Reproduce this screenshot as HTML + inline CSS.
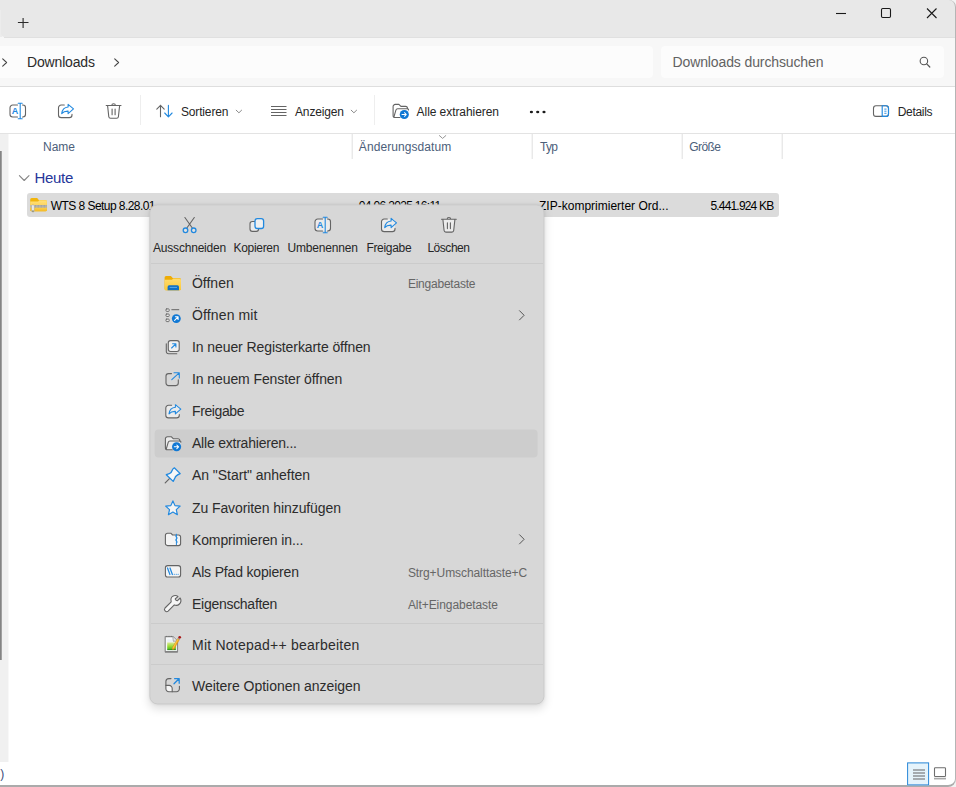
<!DOCTYPE html><html lang="de"><head><meta charset="utf-8"><title>Downloads</title><style>
*{box-sizing:border-box}
html,body{margin:0;padding:0}
body{width:956px;height:787px;overflow:hidden;background:#fff;position:relative;font-family:"Liberation Sans",sans-serif;}
.a{position:absolute}
.t{position:absolute;white-space:nowrap;line-height:20px;height:20px}
svg{position:absolute;left:0;top:0;overflow:visible}
</style></head><body>
<div class="a" style="left:0;top:0;width:956px;height:87px;background:#f7f7f7"></div>
<div class="a" style="left:0;top:0;width:2px;height:37px;background:#ececec"></div>
<div class="a" style="left:0;top:0;width:2px;height:10px;background:#e8e8e8"></div>
<div class="a" style="left:1px;top:0;width:955px;height:37px;background:#e8e8e8;border-bottom-left-radius:4px"></div>
<div class="a" style="left:4px;top:37px;width:952px;height:1px;background:#e0e0e0"></div>
<div class="a" style="left:-10px;top:46px;width:663px;height:32px;background:#fcfcfc;border-radius:4px"></div>
<div class="a" style="left:661px;top:46px;width:283px;height:32px;background:#fcfcfc;border-radius:4px"></div>
<div class="a" style="left:0;top:86px;width:956px;height:1px;background:#dedede"></div>
<div class="a" style="left:0;top:87px;width:956px;height:46px;background:#fff"></div>
<div class="a" style="left:0;top:133px;width:956px;height:1px;background:#e3e3e3"></div>
<div class="a" style="left:0;top:134px;width:8px;height:628px;background:#f0f0f0"></div>
<div class="a" style="left:8px;top:134px;width:1px;height:628px;background:#f8f8f8"></div>
<div class="a" style="left:0;top:151px;width:2px;height:509px;background:linear-gradient(90deg,#848484 50%,#a0a0a0 50%)"></div>
<div class="a" style="left:351px;top:134px;width:2px;height:25px;background:linear-gradient(90deg,#f5f5f5 50%,#e9e9e9 50%)"></div>
<div class="a" style="left:531px;top:134px;width:2px;height:25px;background:linear-gradient(90deg,#f5f5f5 50%,#e9e9e9 50%)"></div>
<div class="a" style="left:681px;top:134px;width:2px;height:25px;background:linear-gradient(90deg,#f5f5f5 50%,#e9e9e9 50%)"></div>
<div class="a" style="left:781px;top:134px;width:2px;height:25px;background:linear-gradient(90deg,#f5f5f5 50%,#e9e9e9 50%)"></div>
<div class="a" style="left:26.700px;top:193px;width:752px;height:24px;background:#dbdbdb;border-radius:3px"></div>
<div class="a" style="left:-20px;top:0;width:976px;height:787px;border:1px solid #b5b5b5;border-top:0;border-left:0;border-bottom:2.2px solid #ababab;border-radius:0 7px 8px 0;box-shadow:0 0 0 12px #f3f3f3;pointer-events:none"></div>
<div class="a" style="left:907px;top:762px;transform:translate(.1px,.4px);width:21.800px;height:23.200px;background:#e5f3fb;border:1px solid #2b88d8"></div>
<span class="t" style="left:27.00px;top:52.00px;font-size:14px;color:#2b2b2b;letter-spacing:-0.158px;">Downloads</span>
<span class="t" style="left:672.50px;top:52.00px;font-size:14px;color:#626262;letter-spacing:-0.116px;">Downloads durchsuchen</span>
<span class="t" style="left:181.00px;top:102.00px;font-size:12px;color:#262626;letter-spacing:-0.161px;">Sortieren</span>
<span class="t" style="left:295.00px;top:102.00px;font-size:12px;color:#262626;letter-spacing:-0.148px;">Anzeigen</span>
<span class="t" style="left:416.60px;top:102.00px;font-size:12px;color:#262626;letter-spacing:-0.065px;">Alle extrahieren</span>
<span class="t" style="left:897.70px;top:102.00px;font-size:12px;color:#262626;letter-spacing:-0.297px;">Details</span>
<span class="t" style="left:43.00px;top:137.00px;font-size:12px;color:#4c607a;">Name</span>
<span class="t" style="left:358.80px;top:137.00px;font-size:12px;color:#4c607a;letter-spacing:0.085px;">Änderungsdatum</span>
<span class="t" style="left:540.00px;top:137.00px;font-size:12px;color:#4c607a;letter-spacing:-0.671px;">Typ</span>
<span class="t" style="left:689.30px;top:137.00px;font-size:12px;color:#4c607a;letter-spacing:-0.577px;">Größe</span>
<span class="t" style="left:34.60px;top:167.00px;font-size:15px;color:#26379a;line-height:21px;height:21px;letter-spacing:-0.332px;">Heute</span>
<span class="t" style="left:50.80px;top:196.00px;font-size:12px;color:#000;letter-spacing:-0.557px;">WTS 8 Setup 8.28.01</span>
<span class="t" style="left:358.80px;top:196.00px;font-size:12px;color:#000;letter-spacing:-0.669px;">04.06.2025 16:11</span>
<span class="t" style="left:539.00px;top:196.00px;font-size:12px;color:#000;letter-spacing:0.007px;">ZIP-komprimierter Ord...</span>
<span class="t" style="left:710.40px;top:196.00px;font-size:12px;color:#000;letter-spacing:-0.812px;">5.441.924 KB</span>
<span class="t" style="left:0.30px;top:764.00px;font-size:12px;color:#3c4a78;">)</span>
<svg width="956" height="787" viewBox="0 0 956 787" fill="none">

<!-- new tab plus -->
<path d="M17.900 22.500h10.600M23.100 17.900v10" stroke="#2b2b2b" stroke-width="1.100"/>
<!-- window controls -->
<path d="M836 13.500h10" stroke="#1a1a1a" stroke-width="1.100"/>
<rect x="881.500" y="8.500" width="9" height="9" rx="1.200" stroke="#1a1a1a" stroke-width="1.100"/>
<path d="M927 8.500l9.500 9.500M936.500 8.500l-9.500 9.500" stroke="#1a1a1a" stroke-width="1.100"/>
<!-- breadcrumb chevrons -->
<path d="M2.700 58.800l3.900 3.700l-3.900 3.700" stroke="#444" stroke-width="1.100" stroke-linecap="round" stroke-linejoin="round"/>
<path d="M114.700 58.800l3.900 3.700l-3.900 3.700" stroke="#444" stroke-width="1.100" stroke-linecap="round" stroke-linejoin="round"/>
<!-- search icon -->
<circle cx="923.900" cy="61" r="3.750" stroke="#555" stroke-width="1.100"/>
<path d="M926.700 63.900l3.100 3.100" stroke="#555" stroke-width="1.200" stroke-linecap="round"/>
<!-- toolbar -->
<g transform="translate(9.5,105)" stroke-linecap="round" stroke-linejoin="round">
<rect x=".5" y="0" width="15.500" height="12" rx="2.700" fill="none"/>
<path d="M8 0H3.2A2.7 2.7 0 0 0 .5 2.7v6.6A2.7 2.7 0 0 0 3.2 12H8M13 0h.3A2.7 2.7 0 0 1 16 2.7v6.6a2.7 2.7 0 0 1-2.700 2.700H13" stroke="#646464" stroke-width="1.1"/>
<path d="M10.700 -1.700V13.700M8.700 -1.700h4M8.700 13.700h4" stroke="#2289df" stroke-width="1.100"/>
<text x="2.300" y="9.300" font-family="Liberation Sans, sans-serif" font-size="9" font-weight="bold" fill="#2289df" stroke="none">A</text>
</g>
<g transform="translate(58.5,105)" stroke-linecap="round" stroke-linejoin="round">
<rect x="0" y="0" width="13.500" height="12.600" rx="2.700" fill="none"/>
<path d="M5.800 0H2.700A2.700 2.700 0 0 0 0 2.700v7.200a2.700 2.700 0 0 0 2.700 2.700h8.100a2.700 2.700 0 0 0 2.700 -2.700V9.300" stroke="#646464" stroke-width="1.100"/>
<path d="M9.600 -0.600L15 3.900L9.600 8.600V6.100C6.600 6 4.600 6.900 3.200 8.600C3.600 5 5.800 2.400 9.600 2Z" stroke="#2289df" stroke-width="1.100" fill="none"/>
</g>
<g transform="translate(106.2,105.5)" stroke="#646464" stroke-width="1.100" stroke-linecap="round" stroke-linejoin="round">
<path d="M1.400 0.200L2.600 11.200a1.800 1.800 0 0 0 1.800 1.600h6a1.800 1.800 0 0 0 1.800 -1.600L13.400 0.200Z" fill="none" stroke="none"/>
<path d="M0 0H14.800M5.600 0a1.800 1.800 0 0 1 3.600 0M1.400 0.200L2.600 11.200a1.800 1.800 0 0 0 1.800 1.600h6a1.800 1.800 0 0 0 1.800 -1.600L13.400 0.200M5.900 3.500v5.800M8.900 3.500v5.800"/>
</g>
<path d="M140.500 95v30M374.500 95v30" stroke="#eeeeee" stroke-width="1"/>
<!-- sort icon -->
<path d="M160.500 116.800V105.400M156.800 109.200l3.700 -3.800l3.700 3.800" stroke="#646464" stroke-width="1.100" stroke-linecap="round" stroke-linejoin="round"/>
<path d="M168.400 105.400V116.800M164.700 113l3.700 3.800l3.700 -3.800" stroke="#2289df" stroke-width="1.100" stroke-linecap="round" stroke-linejoin="round"/>
<path d="M236.2 110.2l2.700 2.600l2.700 -2.600" stroke="#8a8a8a" stroke-width="1" stroke-linecap="round" stroke-linejoin="round"/>
<!-- view icon -->
<path d="M271 106.500h15.500M271 109.500h15.500M271 112.500h15.500M271 115.500h15.500" stroke="#646464" stroke-width="1"/>
<path d="M351.2 110.2l2.700 2.600l2.700 -2.600" stroke="#8a8a8a" stroke-width="1" stroke-linecap="round" stroke-linejoin="round"/>
<g transform="translate(393,104)" stroke-linecap="round" stroke-linejoin="round">
<path d="M7 13.500H2.200A2.100 2.100 0 0 1 .1 11.400V2.500A2.100 2.100 0 0 1 2.200 .4H5.900L7.900 2.400H12.500A2 2 0 0 1 14.500 4.400V4.700H15.500V10Z" stroke="none" fill="none"/>
<path d="M7 13.500H2.200A2.100 2.100 0 0 1 .1 11.400V2.500A2.100 2.100 0 0 1 2.200 .4H5.900L7.900 2.400H12.500A2 2 0 0 1 14.500 4.400V4.700" stroke="#646464" stroke-width="1.100"/>
<path d="M1 12.600L2.900 6.100A1.900 1.900 0 0 1 4.700 4.700H14.500A1 1 0 0 1 15.500 6" stroke="#646464" stroke-width="1.100"/>
<circle cx="11.300" cy="10.500" r="4.550" fill="#1078d4"/>
<path d="M9 10.500h4.200M11.500 8.700l1.800 1.800l-1.800 1.800" stroke="#fff" stroke-width="1.050"/>
</g>
<ellipse cx="531.400" cy="112" rx="1.600" ry="1.350" fill="#1a1a1a"/><ellipse cx="537.700" cy="112" rx="1.600" ry="1.350" fill="#1a1a1a"/><ellipse cx="544" cy="112" rx="1.600" ry="1.350" fill="#1a1a1a"/>
<!-- details icon -->
<rect x="873.500" y="105.700" width="15" height="10.700" rx="2.500" stroke="#646464" stroke-width="1.100"/>
<path d="M882.200 105.700h3.800A2.500 2.500 0 0 1 888.500 108.200v5.700a2.500 2.500 0 0 1 -2.500 2.500h-3.800z" stroke="#2289df" stroke-width="1.150"/>
<path d="M884.300 109.100h2.200M884.300 111.200h2.200M884.300 113.300h2.200" stroke="#2289df" stroke-width="0.900"/>
<!-- sort indicator chevron in header -->
<path d="M439.400 135.600l3.200 2.800l3.200 -2.800" stroke="#959595" stroke-width="1" stroke-linecap="round" stroke-linejoin="round"/>
<!-- group chevron -->
<path d="M19.400 175.700l4.800 4.800l4.800 -4.800" stroke="#858585" stroke-width="1.100" stroke-linecap="round" stroke-linejoin="round"/>
<!-- zip folder icon -->
<defs><linearGradient id="zfg" x1="0" y1="0" x2="0" y2="1"><stop offset="0" stop-color="#ffe07a"/><stop offset=".6" stop-color="#fdd257"/><stop offset="1" stop-color="#f5bb25"/></linearGradient></defs>
<g transform="translate(30.200,197.900)">
<path d="M0 1.500A1.500 1.500 0 0 1 1.500 0H7l1.600 2H15.200A1.500 1.500 0 0 1 16.700 3.500V11.800A1.500 1.500 0 0 1 15.200 13.300H1.500A1.500 1.500 0 0 1 0 11.800Z" fill="#f2b50c"/>
<path d="M0 3.600H8L9 2.400H15.500A1.200 1.200 0 0 1 16.700 3.600V11.800A1.500 1.500 0 0 1 15.200 13.300H1.500A1.500 1.500 0 0 1 0 11.800Z" fill="url(#zfg)"/>
<path d="M0 8.400H16.700" stroke="#b9b9b4" stroke-width="2.600"/>
<path d="M3.500 7.700H16.700M3.500 9.100H16.700" stroke="#8f8f8a" stroke-width="0.700" stroke-dasharray="0.800 0.700"/>
<rect x="1.500" y="7" width="2.500" height="7" rx="0.700" fill="#f1f1f1" stroke="#a0a09a" stroke-width="0.500"/>
<rect x="1.900" y="12.500" width="1.700" height="1.500" fill="#8a8a70"/>
</g>
<!-- status bar view icons -->
<path d="M913 770h12M913 773h12M913 776h12M913 779h12" stroke="#8e9296" stroke-width="1.300"/>
<rect x="934.500" y="767.800" width="11" height="8.700" rx="0.800" stroke="#6e6e6e" stroke-width="1.100" fill="#fff"/>
<path d="M934 778.600h12" stroke="#a9a9a9" stroke-width="1.700"/>

</svg>
<div class="a" style="left:149px;top:204px;transform:translate(.4px,.4px);width:394.600px;height:500.400px;background:#d7d7d7;border:1px solid #cacaca;border-radius:8px;box-shadow:0 4px 10px rgba(0,0,0,.13),0 0 3px rgba(0,0,0,.05)"></div>
<div class="a" style="left:150.5px;top:263px;width:392px;height:1px;background:#cbcbcb"></div>
<div class="a" style="left:150.5px;top:622.5px;width:392px;height:1px;background:#cbcbcb"></div>
<div class="a" style="left:150.5px;top:664px;width:392px;height:1px;background:#cbcbcb"></div>
<div class="a" style="left:154px;top:429px;transform:translate(.6px,.4px);width:383.300px;height:27.600px;background:#cdcdcd;border-radius:4px"></div>
<span class="t" style="left:153.00px;top:238.00px;font-size:12px;color:#262626;letter-spacing:-0.199px;">Ausschneiden</span>
<span class="t" style="left:233.50px;top:238.00px;font-size:12px;color:#262626;letter-spacing:-0.305px;">Kopieren</span>
<span class="t" style="left:287.50px;top:238.00px;font-size:12px;color:#262626;letter-spacing:-0.173px;">Umbenennen</span>
<span class="t" style="left:366.40px;top:238.00px;font-size:12px;color:#262626;letter-spacing:-0.309px;">Freigabe</span>
<span class="t" style="left:427.40px;top:238.00px;font-size:12px;color:#262626;letter-spacing:-0.462px;">Löschen</span>
<span class="t" style="left:192.00px;top:273.00px;font-size:14px;color:#2c2c2c;letter-spacing:-0.015px;">Öffnen</span>
<span class="t" style="left:192.00px;top:305.00px;font-size:14px;color:#2c2c2c;letter-spacing:0.130px;">Öffnen mit</span>
<span class="t" style="left:192.00px;top:337.00px;font-size:14px;color:#2c2c2c;letter-spacing:-0.088px;">In neuer Registerkarte öffnen</span>
<span class="t" style="left:192.00px;top:369.00px;font-size:14px;color:#2c2c2c;letter-spacing:-0.090px;">In neuem Fenster öffnen</span>
<span class="t" style="left:192.00px;top:401.00px;font-size:14px;color:#2c2c2c;letter-spacing:-0.394px;">Freigabe</span>
<span class="t" style="left:192.00px;top:433.00px;font-size:14px;color:#2c2c2c;letter-spacing:-0.219px;">Alle extrahieren...</span>
<span class="t" style="left:192.00px;top:465.00px;font-size:14px;color:#2c2c2c;letter-spacing:-0.050px;">An "Start" anheften</span>
<span class="t" style="left:192.00px;top:498.00px;font-size:14px;color:#2c2c2c;letter-spacing:-0.090px;">Zu Favoriten hinzufügen</span>
<span class="t" style="left:192.00px;top:530.00px;font-size:14px;color:#2c2c2c;letter-spacing:-0.135px;">Komprimieren in...</span>
<span class="t" style="left:192.00px;top:562.00px;font-size:14px;color:#2c2c2c;letter-spacing:-0.171px;">Als Pfad kopieren</span>
<span class="t" style="left:192.00px;top:594.00px;font-size:14px;color:#2c2c2c;letter-spacing:-0.278px;">Eigenschaften</span>
<span class="t" style="left:192.00px;top:635.00px;font-size:14px;color:#2c2c2c;letter-spacing:0.235px;">Mit Notepad++ bearbeiten</span>
<span class="t" style="left:192.00px;top:676.00px;font-size:14px;color:#2c2c2c;letter-spacing:-0.034px;">Weitere Optionen anzeigen</span>
<span class="t" style="left:407.90px;top:274.00px;font-size:12px;color:#666;letter-spacing:-0.223px;">Eingabetaste</span>
<span class="t" style="left:407.90px;top:563.00px;font-size:12px;color:#666;letter-spacing:-0.074px;">Strg+Umschalttaste+C</span>
<span class="t" style="left:407.90px;top:595.00px;font-size:12px;color:#666;letter-spacing:-0.064px;">Alt+Eingabetaste</span>
<svg width="956" height="787" viewBox="0 0 956 787" fill="none">

<!-- top row icons -->
<g stroke-linecap="round" stroke-linejoin="round">
<path d="M184.900 217.500L192.500 228.300M194.300 217.500L186.700 228.300" stroke="#646464" stroke-width="1.100"/>
<circle cx="185.500" cy="230.300" r="2.300" stroke="#2289df" stroke-width="1.300" fill="#e2e2e2"/>
<circle cx="193.700" cy="230.300" r="2.300" stroke="#2289df" stroke-width="1.300" fill="#e2e2e2"/>
</g>
<!-- copy -->
<rect x="250" y="221.500" width="8.600" height="9.900" rx="2.300" stroke="#646464" stroke-width="1.100" fill="#ececec"/>
<rect x="255" y="218.600" width="8.600" height="9.900" rx="2.300" stroke="#2289df" stroke-width="1.300" fill="#f0f0f0"/>
<g transform="translate(314.5,219)" stroke-linecap="round" stroke-linejoin="round">
<rect x=".5" y="0" width="15.500" height="12" rx="2.700" fill="#ebebeb"/>
<path d="M8 0H3.2A2.7 2.7 0 0 0 .5 2.7v6.6A2.7 2.7 0 0 0 3.2 12H8M13 0h.3A2.7 2.7 0 0 1 16 2.7v6.6a2.7 2.7 0 0 1-2.700 2.700H13" stroke="#646464" stroke-width="1.1"/>
<path d="M10.700 -1.700V13.700M8.700 -1.700h4M8.700 13.700h4" stroke="#2289df" stroke-width="1.100"/>
<text x="2.300" y="9.300" font-family="Liberation Sans, sans-serif" font-size="9" font-weight="bold" fill="#2289df" stroke="none">A</text>
</g>
<g transform="translate(381.5,219)" stroke-linecap="round" stroke-linejoin="round">
<rect x="0" y="0" width="13.500" height="12.600" rx="2.700" fill="#ebebeb"/>
<path d="M5.800 0H2.700A2.700 2.700 0 0 0 0 2.700v7.200a2.700 2.700 0 0 0 2.700 2.700h8.100a2.700 2.700 0 0 0 2.700 -2.700V9.300" stroke="#646464" stroke-width="1.100"/>
<path d="M9.600 -0.600L15 3.900L9.600 8.600V6.100C6.600 6 4.600 6.900 3.200 8.600C3.600 5 5.800 2.400 9.600 2Z" stroke="#2289df" stroke-width="1.100" fill="#ebebeb"/>
</g>
<g transform="translate(441.5,219.3)" stroke="#646464" stroke-width="1.100" stroke-linecap="round" stroke-linejoin="round">
<path d="M1.400 0.200L2.600 11.200a1.800 1.800 0 0 0 1.800 1.600h6a1.800 1.800 0 0 0 1.800 -1.600L13.400 0.200Z" fill="#ebebeb" stroke="none"/>
<path d="M0 0H14.800M5.600 0a1.800 1.800 0 0 1 3.600 0M1.400 0.200L2.600 11.200a1.800 1.800 0 0 0 1.800 1.600h6a1.800 1.800 0 0 0 1.800 -1.600L13.400 0.200M5.900 3.500v5.800M8.900 3.500v5.800"/>
</g>
<!-- item icons -->
<!-- open: folder -->
<defs><linearGradient id="ofg" x1="0" y1="0" x2="0" y2="1"><stop offset="0" stop-color="#ffdc70"/><stop offset="1" stop-color="#fbc93a"/></linearGradient></defs>
<g transform="translate(164.600,275.900)">
<path d="M0 1.500A1.500 1.500 0 0 1 1.500 0H6.300l1.800 2.200H14.900A1.500 1.500 0 0 1 16.400 3.700V12.800A1.500 1.500 0 0 1 14.900 14.300H1.500A1.500 1.500 0 0 1 0 12.800Z" fill="#eeac06"/>
<path d="M0 3.900H7.400L8.600 2.600H14.900A1.500 1.500 0 0 1 16.400 4.100V12.800A1.500 1.500 0 0 1 14.900 14.300H1.500A1.500 1.500 0 0 1 0 12.800Z" fill="url(#ofg)"/>
<path d="M3 14.300V11A1.600 1.600 0 0 1 4.600 9.400h8.200a1.600 1.600 0 0 1 1.600 1.600V14.300Z" fill="#1070c4"/>
<path d="M5 11.500h7.400" stroke="#58a9ea" stroke-width="1"/>
</g>
<!-- open with -->
<g stroke-linecap="round" stroke-linejoin="round">
<rect x="166" y="308.900" width="3.200" height="2.500" rx="0.700" stroke="#646464" stroke-width="0.900" fill="#ebebeb"/>
<rect x="166" y="314" width="3.200" height="2.500" rx="0.700" stroke="#646464" stroke-width="0.900" fill="#ebebeb"/>
<rect x="166" y="319.100" width="3.200" height="2.500" rx="0.700" stroke="#646464" stroke-width="0.900" fill="#ebebeb"/>
<path d="M171.800 309.700H178.800" stroke="#646464" stroke-width="1"/>
<circle cx="176.300" cy="318.600" r="4.450" fill="#1078d4"/>
<path d="M174.600 320.300L178 316.900M175.400 316.800H178.100V319.500" stroke="#fff" stroke-width="1.100"/>
</g>
<!-- new tab -->
<g transform="translate(165,340)" stroke-linecap="round" stroke-linejoin="round">
<path d="M1.300 3.800V11.500A2.200 2.200 0 0 0 3.500 13.700H11.800" stroke="#646464" stroke-width="1.100"/>
<rect x="3.300" y="0.600" width="10.900" height="10.900" rx="2.200" stroke="#646464" stroke-width="1.100" fill="#f0f0f0"/>
<path d="M6.600 8L10.800 3.800M7.600 3.700H10.900V7" stroke="#2289df" stroke-width="1.100"/>
</g>
<!-- new window -->
<g transform="translate(165,372)" stroke-linecap="round" stroke-linejoin="round">
<path d="M6.500 1.600H3.500A2.500 2.500 0 0 0 1 4.100V11.100A2.500 2.500 0 0 0 3.500 13.600H10.800A2.500 2.500 0 0 0 13.300 11.100V7.800" stroke="#646464" stroke-width="1.100"/>
<path d="M6.800 7.700L14.200 .8M9 .7H14.300V6" stroke="#2289df" stroke-width="1.100"/>
</g>
<g transform="translate(165.8,405.3)" stroke-linecap="round" stroke-linejoin="round">
<rect x="0" y="0" width="13.500" height="12.600" rx="2.700" fill="#ebebeb"/>
<path d="M5.800 0H2.700A2.700 2.700 0 0 0 0 2.700v7.200a2.700 2.700 0 0 0 2.700 2.700h8.100a2.700 2.700 0 0 0 2.700 -2.700V9.300" stroke="#646464" stroke-width="1.100"/>
<path d="M9.600 -0.600L15 3.900L9.600 8.600V6.100C6.600 6 4.600 6.900 3.200 8.600C3.600 5 5.800 2.400 9.600 2Z" stroke="#2289df" stroke-width="1.100" fill="#ebebeb"/>
</g>
<g transform="translate(165.3,436.3)" stroke-linecap="round" stroke-linejoin="round">
<path d="M7 13.500H2.200A2.100 2.100 0 0 1 .1 11.400V2.500A2.100 2.100 0 0 1 2.200 .4H5.900L7.900 2.400H12.500A2 2 0 0 1 14.500 4.400V4.700H15.500V10Z" stroke="none" fill="#ebebeb"/>
<path d="M7 13.500H2.200A2.100 2.100 0 0 1 .1 11.400V2.500A2.100 2.100 0 0 1 2.200 .4H5.900L7.900 2.400H12.500A2 2 0 0 1 14.500 4.400V4.700" stroke="#646464" stroke-width="1.100"/>
<path d="M1 12.600L2.900 6.100A1.900 1.900 0 0 1 4.700 4.700H14.500A1 1 0 0 1 15.500 6" stroke="#646464" stroke-width="1.100"/>
<circle cx="11.300" cy="10.500" r="4.550" fill="#1078d4"/>
<path d="M9 10.500h4.200M11.500 8.700l1.800 1.800l-1.800 1.800" stroke="#fff" stroke-width="1.050"/>
</g>
<!-- pin -->
<g stroke-linecap="round" stroke-linejoin="round">
<path d="M169.700 478.300L165.200 482.900" stroke="#646464" stroke-width="1.200"/>
<path d="M174.300 467.800L180.200 473.600C177.500 474.700 175.300 476 174.900 478L173.200 481.400L166.300 474.700L169.400 473.600C171 473 171.700 471.800 172.100 470.500C172.500 469.200 173 468.300 174.300 467.800Z" stroke="#2289df" stroke-width="1.300" fill="#f7f7f7"/>
</g>
<!-- star -->
<path d="M172.90 500.90L174.99 505.63L180.13 506.15L176.28 509.60L177.37 514.65L172.90 512.05L168.43 514.65L169.52 509.60L165.67 506.15L170.81 505.63Z" stroke="#2289df" stroke-width="1.200" stroke-linejoin="round" fill="#f4f4f4"/>
<!-- compress -->
<g transform="translate(165,532.700)" stroke-linecap="round" stroke-linejoin="round">
<path d="M7.600 2.300L5.800 .5H2.500A2.100 2.100 0 0 0 .4 2.600V10.800A2.100 2.100 0 0 0 2.500 12.900H13.500A2.100 2.100 0 0 0 15.600 10.800V4.400A2.100 2.100 0 0 0 13.500 2.300Z" stroke="#646464" stroke-width="1.100" fill="#f4f4f4"/>
<path d="M11.400 1.500V12M10.400 3.300h1M11.400 5.300h1M10.400 7.300h1M11.400 9.300h1" stroke="#2289df" stroke-width="1"/>
</g>
<!-- copy path -->
<g transform="translate(165,565.200)" stroke-linecap="round" stroke-linejoin="round">
<rect x="0.400" y="0.400" width="15.200" height="11.400" rx="2.300" stroke="#646464" stroke-width="1.100" fill="#f4f4f4"/>
<path d="M2.500 2.800L4.900 9.300M5 2.800L7.400 9.300" stroke="#2289df" stroke-width="1.250"/>
<path d="M9.200 9h.1M11.200 9h.1M13.100 9h.1" stroke="#2289df" stroke-width="1.100"/>
</g>
<!-- properties wrench -->
<path d="M178 596.600C176.500 595 173.500 595 171.800 597C170.500 598.600 170.500 600.300 171.200 601.800L165 608A2.200 2.200 0 0 0 168.100 611.100L174.300 604.900C176 605.600 178 605.400 179.400 604C181 602.400 181.300 600 180.200 598L177.500 600.700C176.500 600.900 175 599.500 175.300 598.800Z" stroke="#646464" stroke-width="1.100" stroke-linejoin="round" fill="#f6f6f6"/>
<!-- notepad++ -->
<defs><linearGradient id="npg" x1="0" y1="0" x2="0" y2="1"><stop offset="0" stop-color="#dbe89a"/><stop offset=".5" stop-color="#9adb35"/><stop offset=".82" stop-color="#5cc028"/><stop offset="1" stop-color="#1c7a12"/></linearGradient></defs>
<g>
<path d="M165.200 636.700H173L177.500 641.200V651.700H165.200Z" fill="#f7f9fa" stroke="#8c8c8c" stroke-width="1.200" stroke-linejoin="round"/>
<path d="M165 652H177.700" stroke="#7e7e7e" stroke-width="1.300"/>
<path d="M173 636.700V641.200H177.500" fill="#e2e2e2" stroke="#8c8c8c" stroke-width="0.700"/>
<path d="M166 636.400H172.600" stroke="#6a6a6a" stroke-width="0.900" stroke-dasharray="0.900 0.800"/>
<path d="M167.200 639.300H172.500V642.500H167.200Z" fill="#e9f1f5"/>
<path d="M167.200 642.400H175.900V650.100H167.200Z" fill="url(#npg)"/>
<path d="M172.500 649.700L172.150 648.050L177.650 638.450L179.550 639.550L174.050 649.150Z" fill="#f2a81c" stroke="#b87a10" stroke-width="0.300"/>
<path d="M172.900 648.200L178.100 639.100" stroke="#ffd25e" stroke-width="0.700"/>
<path d="M177.900 638.300L179.700 639.400" stroke="#8d93a6" stroke-width="1"/>
<circle cx="179.700" cy="637.300" r="1.350" fill="#a81616"/>
</g>
<!-- more options -->
<g stroke-linecap="round" stroke-linejoin="round">
<path d="M165.900 685.400H169.200A3 3 0 0 1 172.200 688.400V691.800H168.900A3 3 0 0 1 165.900 688.800Z" fill="#f6f6f6"/>
<path d="M171 678.600H168.900A3 3 0 0 0 165.900 681.600V688.800A3 3 0 0 0 168.900 691.800H176.400A3 3 0 0 0 179.400 688.800V686.300" stroke="#646464" stroke-width="1.100"/>
<path d="M165.900 685.400H169.200A3 3 0 0 1 172.200 688.400V691.800" stroke="#646464" stroke-width="1.100"/>
<path d="M174 683.800L179 678.800M174.600 678.700H179.200V683.300" stroke="#2289df" stroke-width="1.250"/>
</g>
<path d="M519.5 310.7l4.600 4.600l-4.600 4.600" stroke="#555" stroke-width="1" stroke-linecap="round" stroke-linejoin="round"/>
<path d="M519.5 534.7l4.600 4.600l-4.600 4.600" stroke="#555" stroke-width="1" stroke-linecap="round" stroke-linejoin="round"/>

</svg>
</body></html>
